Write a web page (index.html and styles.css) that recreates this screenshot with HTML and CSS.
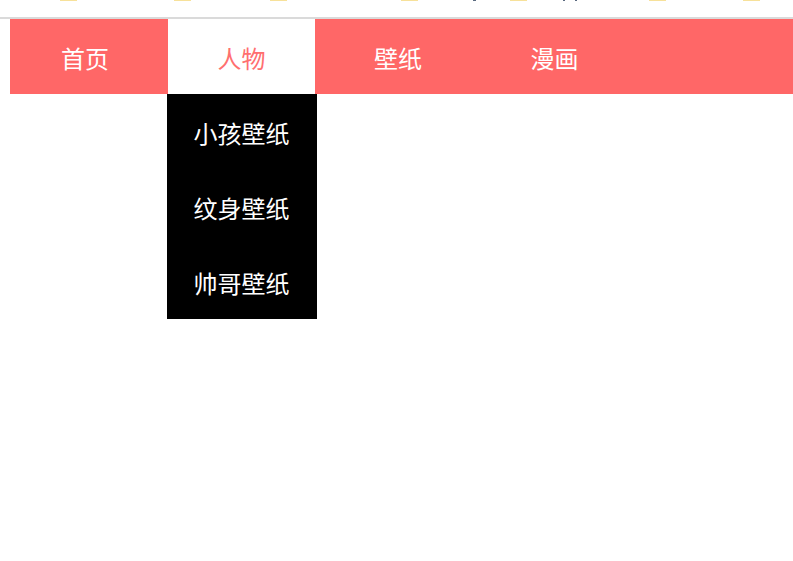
FILE: index.html
```html
<!DOCTYPE html>
<html lang="zh-CN">
<head>
<meta charset="utf-8">
<title>导航</title>
<link rel="stylesheet" href="styles.css">
</head>
<body>
<div class="topbar">
  <span class="mark y m1"></span>
  <span class="mark y m2"></span>
  <span class="mark y m3"></span>
  <span class="mark y m4"></span>
  <span class="mark d m5"></span>
  <span class="mark y m6"></span>
  <span class="mark d m7"></span>
  <span class="mark d m8"></span>
  <span class="mark y m9"></span>
  <span class="mark y m10"></span>
</div>
<nav class="nav">
  <ul class="menu">
    <li class="item"><a class="link">首页</a></li>
    <li class="item has-sub">
      <a class="link active">人物</a>
      <ul class="sub">
        <li><a class="sub-link">小孩壁纸</a></li>
        <li><a class="sub-link">纹身壁纸</a></li>
        <li><a class="sub-link">帅哥壁纸</a></li>
      </ul>
    </li>
    <li class="item"><a class="link">壁纸</a></li>
    <li class="item"><a class="link">漫画</a></li>
  </ul>
</nav>
</body>
</html>
```
FILE: styles.css
```css
* { box-sizing: border-box; }
html, body { margin: 0; padding: 0; background: #fff; }
body {
  font-family: "Noto Sans CJK SC", "Microsoft YaHei", sans-serif;
  width: 793px;
  height: 561px;
  overflow: hidden;
}
.topbar {
  height: 19px;
  border-bottom: 2px solid #dadada;
  display: flex;
  align-items: flex-start;
}
.mark { height: 1px; flex: none; }
.mark.y { width: 17px; background: #f7e19a; }
.mark.d { width: 3px; background: #5a6a80; }
.m1 { margin-left: 60px; }
.m2 { margin-left: 97px; }
.m3 { margin-left: 79px; }
.m4 { margin-left: 114px; }
.m5 { margin-left: 55px; }
.m6 { margin-left: 34px; }
.m7 { margin-left: 36px; width: 2px !important; }
.m8 { margin-left: 10px; width: 2px !important; }
.m9 { margin-left: 72px; }
.m10 { margin-left: 77px; }

.nav {
  margin-left: 10px;
  background: #ff6767;
  height: 75px;
}
.menu {
  list-style: none;
  margin: 0;
  padding: 0;
  display: flex;
  gap: 6.5px;
  height: 100%;
}
.item {
  width: 150px;
  height: 75px;
  position: relative;
}
.link {
  display: block;
  height: 75px;
  line-height: 77px;
  text-align: center;
  color: #fff;
  font-size: 24px;
}
.link.active {
  background: #fff;
  color: #ff6f6f;
  margin: 0 1.5px 0 1.5px;
}
.sub {
  list-style: none;
  margin: 0;
  padding: 0;
  position: absolute;
  left: 0;
  top: 75px;
  width: 150px;
  background: #000;
}
.sub-link {
  display: block;
  height: 75px;
  line-height: 78px;
  text-align: center;
  color: #fff;
  font-size: 24px;
}
```
